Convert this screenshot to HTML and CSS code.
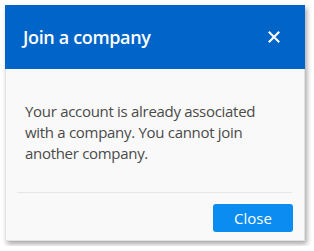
FILE: index.html
```html
<!DOCTYPE html>
<html>
<head>
<meta charset="utf-8">
<link rel="stylesheet" href="styles.css">
</head>
<body>
<div class="dialog">
  <div class="header">
    <span class="title">Join a company</span>
    <svg class="close-x" width="12" height="12" viewBox="0 0 12 12"><path d="M1.5 1.5L10.5 10.5M10.5 1.5L1.5 10.5" stroke="#fff" stroke-width="2" stroke-linecap="square"/></svg>
  </div>
  <div class="body">
    <p class="msg">Your account is already associated with a company. You cannot join another company.</p>
  </div>
  <div class="footer">
    <button class="btn">Close</button>
  </div>
</div>
</body>
</html>
```
FILE: styles.css
```css
html, body { margin: 0; padding: 0; background: #fff; }
body { padding: 5px; font-family: "Open Sans", "Noto Sans", sans-serif; }
.dialog {
  width: 300px;
  height: 236px;
  box-sizing: border-box;
  background: #f9f9f9;
  border: 1px solid #e2e2e2;
  border-top: none;
  box-shadow: 2px 3px 5px rgba(0,0,0,0.35);
  display: flex;
  flex-direction: column;
}
.header {
  height: 64px;
  margin: 0 -1px;
  background: #0064c9;
  display: flex;
  align-items: center;
  justify-content: space-between;
  padding: 0 25px 0 18px;
}
.title { color: #fff; font-size: 18px; font-weight: 600; letter-spacing: -0.35px; }
.close-x { display: block; }
.body { flex: 1; padding: 32px 20px 0 8px; border-bottom: 1px solid #e6e6e6; margin: 0 12px 0 11px; }
.msg { margin: 0; font-size: 15px; line-height: 21px; color: #4a4a4a; letter-spacing: -0.3px; }
.footer { display: flex; justify-content: flex-end; padding: 11px 11px 8px; }
.btn {
  width: 80px; height: 28px;
  background: #0a8cf0;
  color: #fff;
  border: none;
  border-radius: 3px;
  font-family: inherit;
  font-size: 15px;
  padding: 0;
}
```
